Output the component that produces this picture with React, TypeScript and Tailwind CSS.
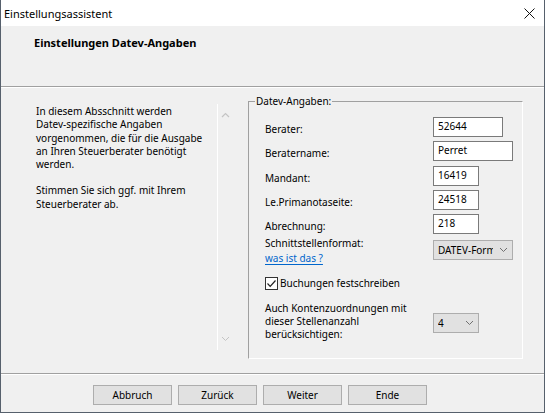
import React from "react";

const font = { fontFamily: '"Noto Sans", "Liberation Sans", sans-serif' };

function ChevronUp() {
  return (
    <svg width="9" height="6" viewBox="0 0 9 6" className="block">
      <polyline points="1,5 4.5,1.5 8,5" fill="none" stroke="#c4c4c4" strokeWidth="1.2" />
    </svg>
  );
}

function ChevronDown({ color = "#c4c4c4" }: { color?: string }) {
  return (
    <svg width="9" height="6" viewBox="0 0 9 6" className="block">
      <polyline points="1,1 4.5,4.5 8,1" fill="none" stroke={color} strokeWidth="1" />
    </svg>
  );
}

function TextBox({ value, width }: { value: string; width: string }) {
  return (
    <div className={`${width} h-[20px] bg-white border border-[#7a7a7a] pl-[4px] leading-[16px] text-black`}>
      {value}
    </div>
  );
}

function Combo({ value, width, textWidth }: { value: string; width: string; textWidth: string }) {
  return (
    <div
      className={`${width} h-[20px] bg-[#e1e1e1] border border-[#adadad] pl-[4px] pr-[4px] flex items-center justify-between`}
    >
      <span className={`${textWidth} overflow-hidden whitespace-nowrap leading-[18px] text-black`}>{value}</span>
      <ChevronDown color="#707070" />
    </div>
  );
}

function FieldRow({ label, value, width }: { label: string; value: string; width: string }) {
  return (
    <div className="h-[20px] flex items-center">
      <div className="w-[168px] pt-[4px] leading-[14px]">{label}</div>
      <TextBox value={value} width={width} />
    </div>
  );
}

export default function App() {
  return (
    <div
      className="w-[545px] h-[413px] bg-[#f0f0f0] border-x border-b border-[#56606c] flex flex-col text-black text-[10px] leading-[13px]"
      style={font}
    >
      {/* Titelleiste */}
      <div className="h-[26px] bg-white flex items-center justify-between pl-[3px] pr-[9px]">
        <div className="text-[11px] leading-[15px]">Einstellungsassistent</div>
        <svg width="11" height="11" viewBox="0 0 11 11">
          <line x1="0.5" y1="0.5" x2="10.5" y2="10.5" stroke="#111" strokeWidth="1" />
          <line x1="10.5" y1="0.5" x2="0.5" y2="10.5" stroke="#111" strokeWidth="1" />
        </svg>
      </div>

      {/* Kopfbereich */}
      <div className="h-[60px] pl-[33px] pt-[9px] text-[11px] font-bold leading-[15px]">
        Einstellungen Datev-Angaben
      </div>
      <div className="h-[2px] border-t border-[#a0a0a0] border-b border-b-white" />

      {/* Inhalt */}
      <div className="h-[285px] flex">
        <div className="w-[247px] flex">
          <div className="w-[216px] pl-[35px] pt-[17px] leading-[13.3px] whitespace-nowrap">
            <p>
              In diesem Absschnitt werden
              <br />
              Datev-spezifische Angaben
              <br />
              vorgenommen, die für die Ausgabe
              <br />
              an Ihren Steuerberater benötigt
              <br />
              werden.
            </p>
            <p className="mt-[13px]">
              Stimmen Sie sich ggf. mit Ihrem
              <br />
              Steuerberater ab.
            </p>
          </div>
          <div className="mt-[16px] h-[246px] w-[16px] border-l border-white flex flex-col items-center justify-between py-[8px]">
            <ChevronUp />
            <ChevronDown />
          </div>
        </div>

        <fieldset className="mt-[6px] w-[275px] h-[265px] border-l border-t border-[#a0a0a0] border-r border-b border-r-white border-b-white">
          <legend className="ml-[6px] px-[1px] leading-[14px]">Datev-Angaben:</legend>
          <div className="pl-[16px] pt-[9px]">
            <div className="flex flex-col gap-[4.25px]">
              <FieldRow label="Berater:" value="52644" width="w-[70px]" />
              <FieldRow label="Beratername:" value="Perret" width="w-[80px]" />
              <FieldRow label="Mandant:" value="16419" width="w-[46px]" />
              <FieldRow label="Le.Primanotaseite:" value="24518" width="w-[46px]" />
              <FieldRow label="Abrechnung:" value="218" width="w-[46px]" />
            </div>

            <div className="flex items-start mt-[2px]">
              <div className="w-[168px] leading-[15px]">
                <div>Schnittstellenformat:</div>
                <a className="text-[#0066cc] underline underline-offset-[2px] cursor-pointer">was ist das ?</a>
              </div>
              <div className="mt-[4px]">
                <Combo value="DATEV-Format" width="w-[80px]" textWidth="w-[55px]" />
              </div>
            </div>

            <label className="flex items-center mt-[10px] leading-[14px]">
              <span className="w-[13px] h-[13px] bg-white border border-[#333] flex items-center justify-center">
                <svg width="11" height="11" viewBox="0 0 11 11">
                  <polyline points="1.5,5.5 4.2,8.3 9.5,2.5" fill="none" stroke="#222" strokeWidth="1.2" />
                </svg>
              </span>
              <span className="ml-[2px]">Buchungen festschreiben</span>
            </label>

            <div className="flex items-start mt-[12px]">
              <div className="w-[168px] leading-[13px]">
                Auch Kontenzuordnungen mit
                <br />
                dieser Stellenanzahl
                <br />
                berücksichtigen:
              </div>
              <div className="mt-[11px]">
                <Combo value="4" width="w-[46px]" textWidth="w-[24px]" />
              </div>
            </div>
          </div>
        </fieldset>
      </div>

      {/* Fußbereich */}
      <div className="h-[2px] border-t border-[#a0a0a0] border-b border-b-white" />
      <div className="h-[37px] pt-[10px] pl-[92px] flex items-start gap-[6px]">
        {["Abbruch", "Zurück", "Weiter", "Ende"].map((label) => (
          <button
            key={label}
            className="w-[79px] h-[20px] bg-[#e1e1e1] border border-[#adadad] leading-[18px] text-black"
          >
            {label}
          </button>
        ))}
      </div>
    </div>
  );
}
